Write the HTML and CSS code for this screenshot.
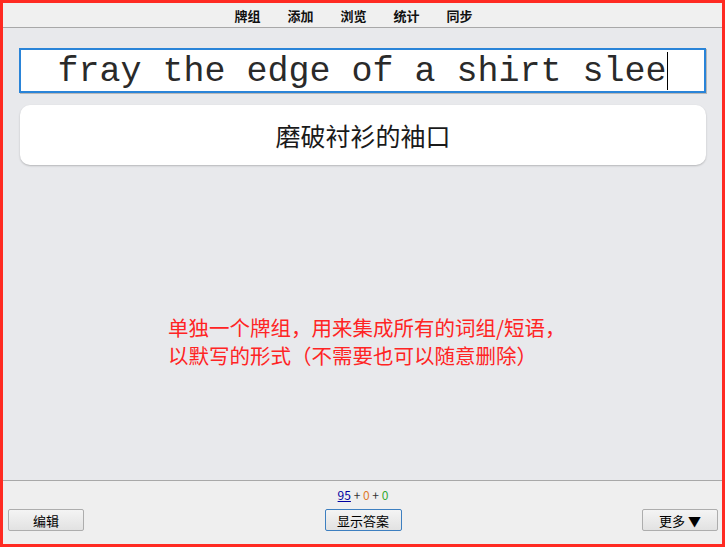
FILE: index.html
```html
<!DOCTYPE html>
<html>

<head>
    <meta charset="utf-8">
    <title>Review</title>
    <link rel="stylesheet" href="styles.css">
</head>

<body>
    <div class="window">
        <div class="toolbar">
            <span>牌组</span>
            <span>添加</span>
            <span>浏览</span>
            <span>统计</span>
            <span>同步</span>
        </div>

        <div class="main">
            <div class="answer-box">
                <span class="typed">fray the edge of a shirt slee</span><span class="cursor"></span>
            </div>
            <div class="card">磨破衬衫的袖口</div>
            <div class="note">
                单独一个牌组，用来集成所有的词组/短语，<br>
                以默写的形式（不需要也可以随意删除）
            </div>
        </div>

        <div class="bottom">
            <div class="counts">
                <span class="new">95</span> + <span class="learn">0</span> + <span class="due">0</span>
            </div>
            <div class="buttons">
                <button class="btn">编辑</button>
                <button class="btn focus">显示答案</button>
                <button class="btn">更多 ▼</button>
            </div>
        </div>
    </div>
</body>

</html>
```

FILE: styles.css
```css
* {
    box-sizing: border-box;
}

body {
    margin: 0;
    font-family: "Noto Sans CJK SC", sans-serif;
}

.window {
    width: 725px;
    height: 547px;
    border: 3px solid #ff2a22;
    display: flex;
    flex-direction: column;
}

.toolbar {
    height: 25px;
    background-color: #f0f0f0;
    border-bottom: 1px solid #a8a8a8;
    display: flex;
    justify-content: center;
    align-items: center;
    gap: 27px;
    padding-right: 18px;
    font-size: 13px;
    font-weight: bold;
    color: #111111;
}

.main {
    flex: 1;
    background-color: #e8e9ec;
    padding: 20px 16px 0 16px;
}

.answer-box {
    height: 45px;
    background-color: #ffffff;
    border: 2px solid #2a84d8;
    box-shadow: 1px 1px 0 #b8b8b8;
    display: flex;
    justify-content: center;
    align-items: center;
    padding-top: 3px;
    font-family: "Liberation Mono", monospace;
    font-size: 35px;
    color: #2a2a2a;
}

.cursor {
    display: inline-block;
    width: 1px;
    height: 38px;
    margin-top: -3px;
    background-color: #000000;
}

.card {
    margin-top: 12px;
    margin-left: 1px;
    height: 60px;
    background-color: #ffffff;
    border-radius: 10px;
    box-shadow: 0 1px 2px rgba(0, 0, 0, 0.22);
    display: flex;
    justify-content: center;
    align-items: center;
    font-family: "Liberation Serif", "Noto Sans CJK SC", serif;
    font-size: 25px;
    color: #1a1a1a;
}

.note {
    margin-top: 148px;
    padding-left: 149px;
    font-size: 20.5px;
    line-height: 28px;
    color: #ff2424;
}

.bottom {
    height: 64px;
    background-color: #efefef;
    border-top: 1px solid #a8a8a8;
    padding: 7px 4px 0 5px;
}

.counts {
    text-align: center;
    font-size: 12px;
    line-height: 14px;
    color: #333333;
}

.new {
    color: #0000a0;
    text-decoration: underline;
}

.learn {
    color: #e07a2a;
}

.due {
    color: #33aa33;
}

.buttons {
    margin-top: 7px;
    display: flex;
    justify-content: space-between;
}

.btn {
    width: 76px;
    height: 22px;
    padding: 0;
    font-family: "Noto Sans CJK SC", sans-serif;
    font-size: 13px;
    color: #000000;
    background: linear-gradient(#f4f4f4, #e2e2e2);
    border: 1px solid #adadad;
    border-radius: 2px;
}

.focus {
    width: 77px;
    border-color: #3d7fc0;
}
```
